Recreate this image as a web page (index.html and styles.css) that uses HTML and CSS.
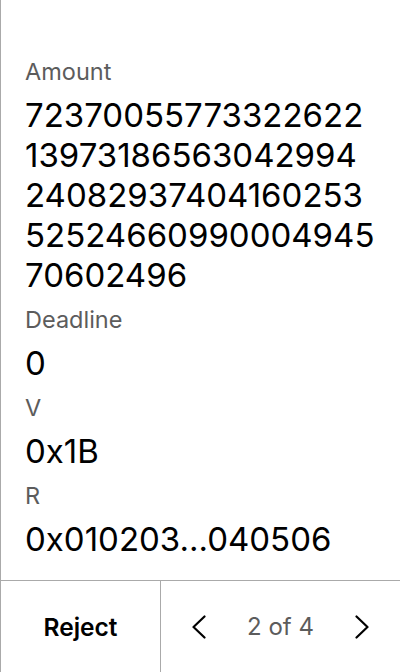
FILE: index.html
```html
<!DOCTYPE html>
<html>
<head>
<meta charset="utf-8">
<link rel="stylesheet" href="styles.css">
</head>
<body>
<div class="screen">
  <div class="content">
    <div class="label">Amount</div>
    <div class="value">7237005577332262213973186563042994240829374041602535252466099000494570602496</div>
    <div class="label">Deadline</div>
    <div class="value">0</div>
    <div class="label">V</div>
    <div class="value">0x1B</div>
    <div class="label">R</div>
    <div class="value">0x010203...040506</div>
  </div>
  <div class="footer">
    <div class="reject">Reject</div>
    <div class="pager">
      <svg class="chev" width="14" height="24" viewBox="0 0 14 24"><path d="M12.5 1.5 L1.5 12 L12.5 22.5" fill="none" stroke="#000" stroke-width="2.2" stroke-linecap="round" stroke-linejoin="round"/></svg>
      <span class="count">2 of 4</span>
      <svg class="chev" width="14" height="24" viewBox="0 0 14 24"><path d="M1.5 1.5 L12.5 12 L1.5 22.5" fill="none" stroke="#000" stroke-width="2.2" stroke-linecap="round" stroke-linejoin="round"/></svg>
    </div>
  </div>
</div>
</body>
</html>
```
FILE: styles.css
```css
html, body { margin: 0; padding: 0; background: #fff; }
.screen {
  width: 400px; height: 672px; box-sizing: border-box;
  border-left: 1px solid #aaa;
  display: flex; flex-direction: column;
  font-family: Inter, "Noto Sans", sans-serif;
}
.content { flex: 1; padding: 57px 24px 0 24px; }
.label { font-size: 23.5px; line-height: 30px; color: #5c5c5c; margin-bottom: 8px; }
.value { font-size: 33px; line-height: 40px; color: #000; word-break: break-all; margin-bottom: 10px; }
.footer { height: 92px; border-top: 1px solid #aaa; display: flex; box-sizing: border-box; }
.reject { width: 159px; border-right: 1px solid #aaa; display: flex; align-items: center; justify-content: center; font-size: 24.5px; font-weight: 600; color: #000; }
.pager { flex: 1; display: flex; align-items: center; justify-content: space-between; padding: 0 31px 0 31px; }
.count { font-size: 24px; color: #5c5c5c; }
```
